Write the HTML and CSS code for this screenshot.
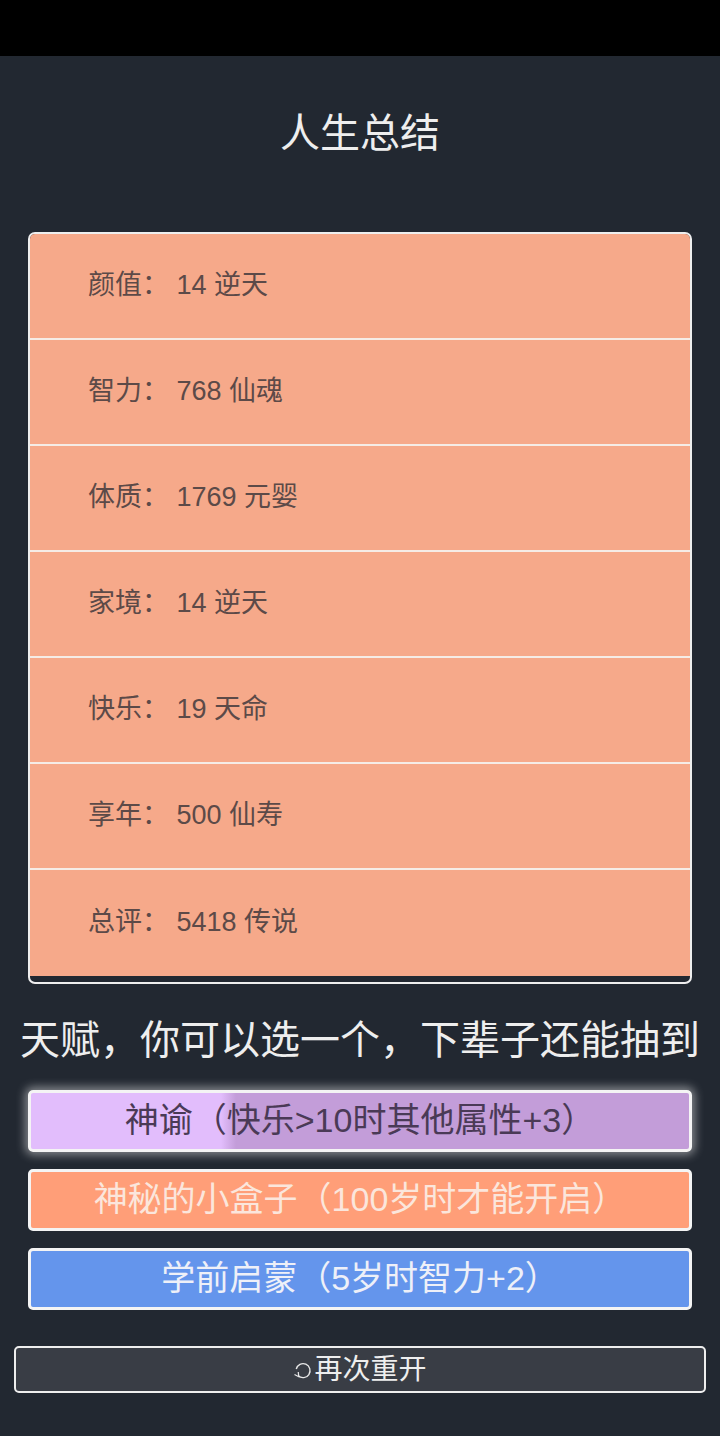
FILE: index.html
```html
<!DOCTYPE html>
<html lang="zh">
<head>
<meta charset="utf-8">
<title>人生总结</title>
<link rel="stylesheet" href="styles.css">
</head>
<body>
<div class="statusbar"></div>
<main class="page">
  <h1 class="title">人生总结</h1>
  <ul class="summary">
    <li class="row">颜值： 14 逆天</li>
    <li class="row">智力： 768 仙魂</li>
    <li class="row">体质： 1769 元婴</li>
    <li class="row">家境： 14 逆天</li>
    <li class="row">快乐： 19 天命</li>
    <li class="row">享年： 500 仙寿</li>
    <li class="row">总评： 5418 传说</li>
  </ul>
  <h2 class="subtitle">天赋，你可以选一个，下辈子还能抽到</h2>
  <div class="talents">
    <button class="talent legend">神谕（快乐&gt;10时其他属性+3）</button>
    <button class="talent orange">神秘的小盒子（100岁时才能开启）</button>
    <button class="talent blue">学前启蒙（5岁时智力+2）</button>
  </div>
  <button class="restart"><svg class="icon" viewBox="0 0 16 16" width="20" height="20"><path d="M4.2 12.6 A5.6 5.6 0 1 0 2.6 7.2" fill="none" stroke="#e8e8e8" stroke-width="1.1"/><path d="M1.2 11.6 L4.6 13.4 L4.2 9.6" fill="none" stroke="#e8e8e8" stroke-width="1"/></svg>再次重开</button>
</main>
</body>
</html>
```
FILE: styles.css
```css
html, body {
  margin: 0;
  padding: 0;
  background: #222831;
  font-family: "Liberation Sans", "Noto Sans CJK SC", sans-serif;
}
.statusbar {
  height: 56px;
  background: #000;
}
.page {
  display: flex;
  flex-direction: column;
  padding-bottom: 43px;
}
.title {
  margin: 0;
  padding-top: 48px;
  height: 176px;
  box-sizing: border-box;
  text-align: center;
  font-family: "Noto Sans CJK SC", sans-serif;
  font-size: 40px;
  font-weight: 400;
  line-height: 52px;
  color: #eeeeee;
}
.summary {
  list-style: none;
  margin: 0 28px;
  padding: 0 0 6px;
  border: 2px solid #eeeeee;
  border-radius: 7px;
  overflow: hidden;
}
.row {
  height: 106px;
  box-sizing: border-box;
  border-bottom: 2px solid #f5ece6;
  background: #f6a98a;
  padding: 0 0 7px 58px;
  display: flex;
  align-items: center;
  font-size: 27px;
  color: #5c4a48;
  white-space: pre;
}
.row:last-child {
  border-bottom: none;
}
.subtitle {
  margin: 0;
  height: 106px;
  display: flex;
  align-items: center;
  justify-content: center;
  font-family: "Noto Sans CJK SC", sans-serif;
  font-size: 40px;
  font-weight: 400;
  color: #eeeeee;
}
.talents {
  display: flex;
  flex-direction: column;
  gap: 17px;
  margin: 0 28px;
}
.talent {
  height: 62px;
  border: 3px solid #f4f4f4;
  border-radius: 5px;
  font-family: inherit;
  font-size: 34px;
  padding: 0 0 8px;
  display: flex;
  align-items: center;
  justify-content: center;
}
.legend {
  background: linear-gradient(90deg, #e2bdfc 0, #e2bdfc 190px, #c39dd9 205px, #c39dd9 100%);
  color: #4a3a56;
  box-shadow: 0 0 10px 3px rgba(255, 255, 255, 0.45);
}
.orange {
  background: #ff9e78;
  color: #fbe6dc;
}
.blue {
  background: #6495ec;
  color: #eef0f8;
}
.restart {
  margin: 36px 14px 0;
  height: 47px;
  background: #393d45;
  border: 2px solid #eeeeee;
  border-radius: 5px;
  color: #eeeeee;
  font-family: "Noto Sans CJK SC", sans-serif;
  font-size: 28px;
  display: flex;
  align-items: center;
  justify-content: center;
  padding: 0 0 5px;
}
.icon {
  margin-right: 1px;
  margin-top: 5px;
}
```
